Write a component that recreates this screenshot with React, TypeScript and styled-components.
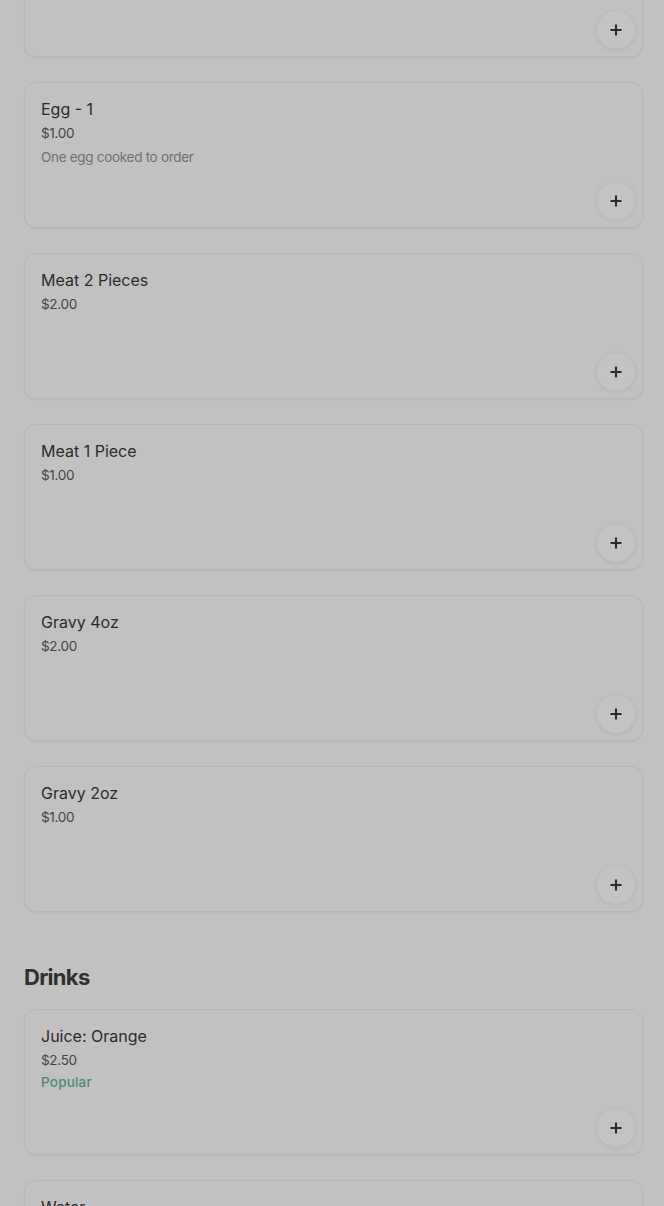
import React from "react";
import styled, { createGlobalStyle } from "styled-components";

const Global = createGlobalStyle`
  html, body { margin: 0; padding: 0; background: #c1c1c1; }
  body { font-family: Inter, "Noto Sans", sans-serif; overflow: hidden; }
`;

const Page = styled.div`
  padding: 0 21px 0 24px;
  height: 1206px;
  overflow: hidden;
  background: #c1c1c1;
`;

const Scroller = styled.div`
  margin-top: -89px;
  display: flex;
  flex-direction: column;
`;

const Section = styled.section`
  display: flex;
  flex-direction: column;
  gap: 25px;
`;

const Heading = styled.h2`
  margin: 50px 0 17px;
  font-size: 22px;
  line-height: 30px;
  font-weight: 700;
  letter-spacing: -0.7px;
  color: #2f2f2f;
`;

const Card = styled.div`
  box-sizing: border-box;
  height: 146px;
  border: 1px solid #b7b7b7;
  border-radius: 12px;
  background: #c1c1c1;
  box-shadow: 0 1px 2px rgba(0, 0, 0, 0.05);
  padding: 14px 7px 7px 16px;
  display: flex;
  flex-direction: column;
`;

const Title = styled.div`
  font-size: 16px;
  line-height: 24px;
  font-weight: 400;
  color: #2c2c2c;
`;

const Price = styled.div`
  font-size: 13.5px;
  line-height: 24px;
  color: #444444;
  letter-spacing: -0.3px;
`;

const Desc = styled.div`
  font-size: 13.5px;
  line-height: 24px;
  color: #717171;
  letter-spacing: -0.3px;
`;

const Tag = styled.div`
  font-size: 13.5px;
  line-height: 20px;
  font-weight: 500;
  letter-spacing: 0.2px;
  color: #4f8a6d;
`;

const AddButton = styled.button`
  margin-top: auto;
  align-self: flex-end;
  width: 38px;
  height: 38px;
  border-radius: 50%;
  border: none;
  background: #c3c3c3;
  box-shadow: 0 1px 5px rgba(0, 0, 0, 0.08);
  display: flex;
  align-items: center;
  justify-content: center;
  padding: 0;
  cursor: pointer;
`;

type Item = { name: string; price: string; desc?: string; tag?: string };

const PlusIcon = () => (
  <svg width="12" height="12" viewBox="0 0 12 12" aria-hidden>
    <path d="M6 0.5v11M0.5 6h11" stroke="#2a2a2a" strokeWidth="2.1" />
  </svg>
);

const ItemCard = ({ item }: { item: Item }) => (
  <Card>
    <Title>{item.name}</Title>
    <Price>{item.price}</Price>
    {item.desc && <Desc>{item.desc}</Desc>}
    {item.tag && <Tag>{item.tag}</Tag>}
    <AddButton aria-label={`Add ${item.name}`}>
      <PlusIcon />
    </AddButton>
  </Card>
);

const sides: Item[] = [
  { name: "Egg - 2", price: "$2.00" },
  { name: "Egg - 1", price: "$1.00", desc: "One egg cooked to order" },
  { name: "Meat 2 Pieces", price: "$2.00" },
  { name: "Meat 1 Piece", price: "$1.00" },
  { name: "Gravy 4oz", price: "$2.00" },
  { name: "Gravy 2oz", price: "$1.00" },
];

const drinks: Item[] = [
  { name: "Juice: Orange", price: "$2.50", tag: "Popular" },
  { name: "Water", price: "$1.00" },
];

export default function App() {
  return (
    <>
      <Global />
      <Page>
        <Scroller>
          <Section>
            {sides.map((it) => (
              <ItemCard key={it.name} item={it} />
            ))}
          </Section>
          <Heading>Drinks</Heading>
          <Section>
            {drinks.map((it) => (
              <ItemCard key={it.name} item={it} />
            ))}
          </Section>
        </Scroller>
      </Page>
    </>
  );
}
